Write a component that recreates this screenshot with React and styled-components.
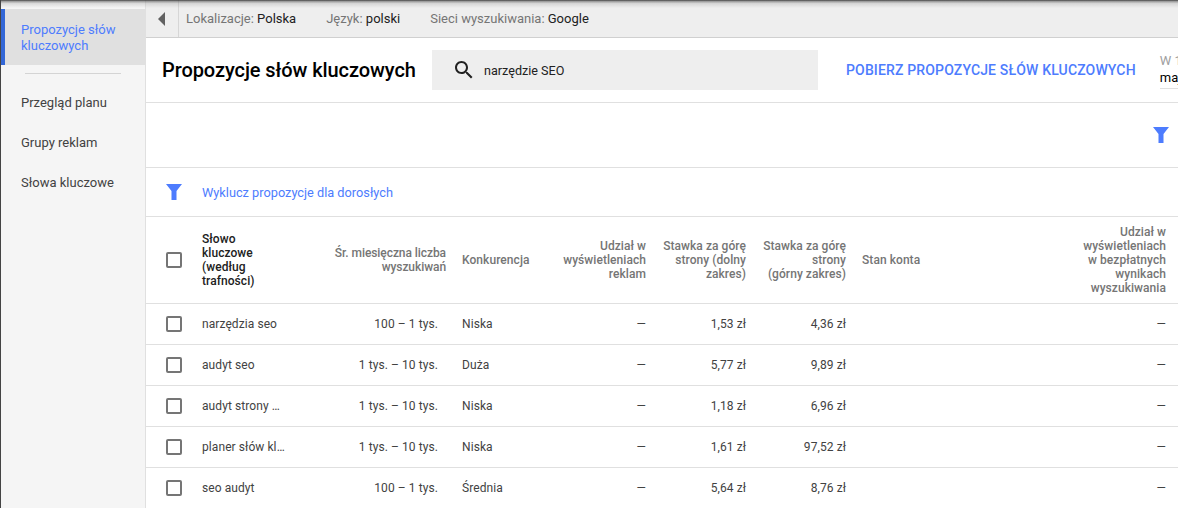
import React from 'react';
import styled, { createGlobalStyle } from 'styled-components';

const GlobalStyle = createGlobalStyle`
  html, body {
    margin: 0;
    height: 100%;
    overflow: hidden;
    background: #fff;
  }
  body {
    font-family: Roboto, "Liberation Sans", sans-serif;
    font-size: 12px;
    color: #212121;
  }
`;

const COLUMNS = '40px 84px 144px 84px 84px 84px 84px 198px 90px';

const Page = styled.div`
  position: relative;
  display: flex;
  width: 1178px;
  height: 508px;
  overflow: hidden;
  border-left: 1px solid #444;
  box-sizing: border-box;
`;

const TopShadow = styled.div`
  position: absolute;
  top: 0;
  left: 0;
  right: 0;
  height: 8px;
  background: linear-gradient(
    rgba(50, 50, 50, 0.9),
    rgba(90, 90, 90, 0.5) 20%,
    rgba(130, 130, 130, 0.22) 45%,
    rgba(160, 160, 160, 0)
  );
  z-index: 2;
`;

const Sidebar = styled.nav`
  flex: 0 0 145px;
  box-sizing: border-box;
  padding-top: 9px;
  background: #f5f5f5;
  border-right: 1px solid #e0e0e0;
`;

const ActiveItem = styled.div`
  height: 56px;
  box-sizing: border-box;
  padding: 13px 16px 0 16px;
  border-left: 4px solid #3367d6;
  background: #e0e0e0;
  color: #4d7cfe;
  font-size: 13px;
  line-height: 16px;
`;

const SideDivider = styled.div`
  height: 1px;
  margin: 8px 24px 8px 24px;
  background: #d4d4d4;
`;

const SideItem = styled.div`
  height: 40px;
  padding-left: 20px;
  display: flex;
  align-items: center;
  font-size: 13px;
  color: #424242;
`;

const Main = styled.div`
  flex: 1;
  min-width: 0;
  display: flex;
  flex-direction: column;
`;

const FilterBar = styled.div`
  flex: 0 0 38px;
  box-sizing: border-box;
  display: flex;
  align-items: stretch;
  background: #eeeeee;
  border-bottom: 1px solid #d0d0d0;
`;

const BackButton = styled.div`
  flex: 0 0 32px;
  display: flex;
  align-items: center;
  justify-content: center;
  border-right: 1px solid #d6d6d6;
`;

const Crumbs = styled.div`
  display: flex;
  align-items: center;
  gap: 30px;
  padding-left: 7px;
  font-size: 13px;
`;

const Crumb = styled.span`
  color: #757575;
  b {
    font-weight: 400;
    color: #212121;
  }
`;

const Header = styled.header`
  flex: 0 0 65px;
  box-sizing: border-box;
  display: flex;
  align-items: center;
  padding-left: 16px;
  border-bottom: 1px solid #e0e0e0;
`;

const Title = styled.h1`
  flex: 0 0 270px;
  margin: 0;
  font-size: 20px;
  font-weight: 500;
  letter-spacing: -0.08px;
  color: #000;
  white-space: nowrap;
`;

const SearchBox = styled.div`
  flex: 0 0 386px;
  height: 40px;
  box-sizing: border-box;
  display: flex;
  align-items: center;
  gap: 8px;
  padding-left: 20px;
  background: #eeeeee;
  font-size: 12.6px;
  color: #212121;
`;

const DownloadLink = styled.a`
  flex: 0 0 auto;
  margin-left: 28px;
  font-size: 14px;
  font-weight: 500;
  letter-spacing: 0.15px;
  color: #4d7cfe;
  white-space: nowrap;
`;

const DateRange = styled.div`
  flex: 0 0 auto;
  margin-left: 24px;
  width: 120px;
  box-sizing: border-box;
  height: 37px;
  border-bottom: 1px solid #e0e0e0;
  white-space: nowrap;
  font-size: 13px;
  line-height: 17px;
  color: #9e9e9e;
  b {
    display: block;
    font-weight: 400;
    color: #000;
  }
`;

const ChartArea = styled.div`
  flex: 0 0 65px;
  box-sizing: border-box;
  display: flex;
  align-items: center;
  justify-content: flex-end;
  padding-right: 9px;
  border-bottom: 1px solid #e0e0e0;
`;

const AdultFilter = styled.div`
  flex: 0 0 49px;
  box-sizing: border-box;
  display: flex;
  align-items: center;
  gap: 20px;
  padding-left: 20px;
  border-bottom: 1px solid #e0e0e0;
  color: #4d7cfe;
  font-size: 12.75px;
`;

const HeadRow = styled.div`
  flex: 0 0 87px;
  box-sizing: border-box;
  display: grid;
  grid-template-columns: ${COLUMNS};
  column-gap: 16px;
  align-items: center;
  border-bottom: 1px solid #e0e0e0;
`;

const Row = styled.div`
  flex: 0 0 41px;
  box-sizing: border-box;
  display: grid;
  grid-template-columns: ${COLUMNS};
  column-gap: 16px;
  align-items: center;
  border-bottom: 1px solid #e0e0e0;
`;

const HeadCell = styled.div`
  font-size: 12px;
  line-height: 14px;
  font-weight: 500;
  letter-spacing: 0.06px;
  color: #757575;
  white-space: nowrap;
  text-align: ${(p) => (p.$right ? 'right' : 'left')};
`;

const KeywordHead = styled(HeadCell)`
  color: #212121;
`;

const AvgHead = styled(HeadCell)`
  letter-spacing: -0.07px;
`;

const Cell = styled.div`
  font-size: 12px;
  letter-spacing: 0.08px;
  color: #424242;
  white-space: nowrap;
  text-align: ${(p) => (p.$right ? 'right' : 'left')};
  padding-right: ${(p) => p.$inset || 0}px;
`;

const KeywordCell = styled(Cell)`
  overflow: hidden;
  text-overflow: ellipsis;
`;

const BoxCell = styled.div`
  display: flex;
  justify-content: flex-start;
  padding-left: 20px;
`;

const Checkbox = styled.span`
  display: block;
  width: 16px;
  height: 16px;
  box-sizing: border-box;
  border: 2px solid #757575;
  border-radius: 2px;
`;

function FilterIcon() {
  return (
    <svg width="16" height="16" viewBox="0 0 16 16" fill="#4d7cfe">
      <path d="M0 0h16l-5.5 7v9h-5V7z" />
    </svg>
  );
}

function SearchIcon() {
  return (
    <svg width="24" height="24" viewBox="0 0 24 24" fill="#212121">
      <path d="M15.5 14h-.79l-.28-.27C15.41 12.59 16 11.11 16 9.5 16 5.91 13.09 3 9.5 3S3 5.91 3 9.5 5.91 16 9.5 16c1.61 0 3.09-.59 4.23-1.57l.27.28v.79l5 4.99L20.49 19l-4.99-5zm-6 0C7.01 14 5 11.99 5 9.5S7.01 5 9.5 5 14 7.01 14 9.5 11.99 14 9.5 14z" />
    </svg>
  );
}

const rows = [
  ['narzędzia seo', '100 – 1 tys.', 'Niska', '1,53 zł', '4,36 zł'],
  ['audyt seo', '1 tys. – 10 tys.', 'Duża', '5,77 zł', '9,89 zł'],
  ['audyt strony www', '1 tys. – 10 tys.', 'Niska', '1,18 zł', '6,96 zł'],
  ['planer słów kluczowych', '1 tys. – 10 tys.', 'Niska', '1,61 zł', '97,52 zł'],
  ['seo audyt', '100 – 1 tys.', 'Średnia', '5,64 zł', '8,76 zł'],
];

export default function App() {
  return (
    <>
      <GlobalStyle />
      <Page>
        <TopShadow />
        <Sidebar>
          <ActiveItem>Propozycje słów kluczowych</ActiveItem>
          <SideDivider />
          <SideItem>Przegląd planu</SideItem>
          <SideItem>Grupy reklam</SideItem>
          <SideItem>Słowa kluczowe</SideItem>
        </Sidebar>
        <Main>
          <FilterBar>
            <BackButton>
              <svg width="8" height="14" viewBox="0 0 8 14" fill="#616161">
                <path d="M7 0v14L0 7z" />
              </svg>
            </BackButton>
            <Crumbs>
              <Crumb>Lokalizacje: <b>Polska</b></Crumb>
              <Crumb>Język: <b>polski</b></Crumb>
              <Crumb>Sieci wyszukiwania: <b>Google</b></Crumb>
            </Crumbs>
          </FilterBar>
          <Header>
            <Title>Propozycje słów kluczowych</Title>
            <SearchBox>
              <SearchIcon />
              narzędzie SEO
            </SearchBox>
            <DownloadLink>POBIERZ PROPOZYCJE SŁÓW KLUCZOWYCH</DownloadLink>
            <DateRange>
              W 12 ostatnich miesiącach
              <b>maj 2018 – kwi 2019</b>
            </DateRange>
          </Header>
          <ChartArea>
            <FilterIcon />
          </ChartArea>
          <AdultFilter>
            <FilterIcon />
            Wyklucz propozycje dla dorosłych
          </AdultFilter>
          <HeadRow>
            <BoxCell><Checkbox /></BoxCell>
            <KeywordHead>Słowo<br />kluczowe<br />(według<br />trafności)</KeywordHead>
            <AvgHead $right>Śr. miesięczna liczba<br />wyszukiwań</AvgHead>
            <HeadCell>Konkurencja</HeadCell>
            <HeadCell $right>Udział w<br />wyświetleniach<br />reklam</HeadCell>
            <HeadCell $right>Stawka za górę<br />strony (dolny<br />zakres)</HeadCell>
            <HeadCell $right>Stawka za górę<br />strony<br />(górny zakres)</HeadCell>
            <HeadCell>Stan konta</HeadCell>
            <HeadCell $right>Udział w<br />wyświetleniach<br />w bezpłatnych<br />wynikach<br />wyszukiwania</HeadCell>
          </HeadRow>
          {rows.map((r) => (
            <Row key={r[0]}>
              <BoxCell><Checkbox /></BoxCell>
              <KeywordCell>{r[0]}</KeywordCell>
              <Cell $right $inset={8}>{r[1]}</Cell>
              <Cell>{r[2]}</Cell>
              <Cell $right>—</Cell>
              <Cell $right>{r[3]}</Cell>
              <Cell $right>{r[4]}</Cell>
              <Cell />
              <Cell $right>—</Cell>
            </Row>
          ))}
        </Main>
      </Page>
    </>
  );
}
